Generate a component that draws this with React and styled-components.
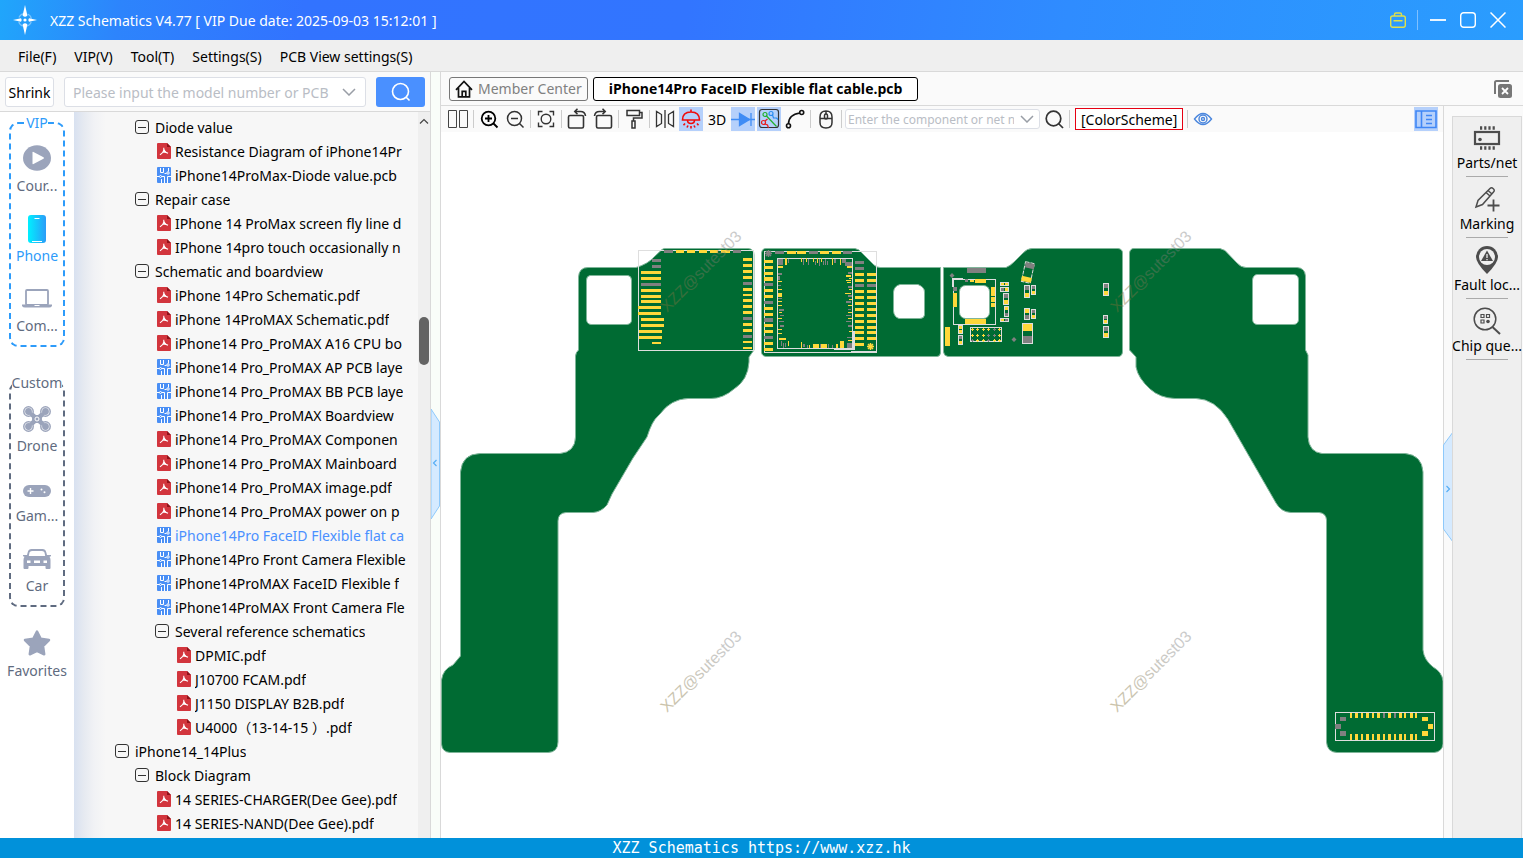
import React, { useState } from 'react'
import styled, { createGlobalStyle, css } from 'styled-components'

const GlobalStyle = createGlobalStyle`
  * {
    box-sizing: border-box;
  }
  body {
    margin: 0;
    background: #fafafa;
    color: #000;
    font-family: 'Noto Sans', 'Noto Sans CJK SC', sans-serif;
    font-size: 14px;
  }
  button,
  input {
    font-family: inherit;
    font-size: inherit;
  }
`

// data
const menus = ['File(F)', 'VIP(V)', 'Tool(T)', 'Settings(S)', 'PCB View settings(S)']

const tree = [
  { level: 1, type: 'folder', name: 'Diode value' },
  { level: 2, type: 'pdf', name: 'Resistance Diagram of iPhone14Pr' },
  { level: 2, type: 'pcb', name: 'iPhone14ProMax-Diode value.pcb' },
  { level: 1, type: 'folder', name: 'Repair case' },
  { level: 2, type: 'pdf', name: 'IPhone 14 ProMax screen fly line d' },
  { level: 2, type: 'pdf', name: 'IPhone 14pro touch occasionally n' },
  { level: 1, type: 'folder', name: 'Schematic and boardview' },
  { level: 2, type: 'pdf', name: 'iPhone 14Pro Schematic.pdf' },
  { level: 2, type: 'pdf', name: 'iPhone 14ProMAX Schematic.pdf' },
  { level: 2, type: 'pdf', name: 'iPhone14 Pro_ProMAX A16 CPU bo' },
  { level: 2, type: 'pcb', name: 'iPhone14 Pro_ProMAX AP PCB laye' },
  { level: 2, type: 'pcb', name: 'iPhone14 Pro_ProMAX BB PCB laye' },
  { level: 2, type: 'pcb', name: 'iPhone14 Pro_ProMAX Boardview' },
  { level: 2, type: 'pdf', name: 'iPhone14 Pro_ProMAX Componen' },
  { level: 2, type: 'pdf', name: 'iPhone14 Pro_ProMAX Mainboard' },
  { level: 2, type: 'pdf', name: 'iPhone14 Pro_ProMAX image.pdf' },
  { level: 2, type: 'pdf', name: 'iPhone14 Pro_ProMAX power on p' },
  { level: 2, type: 'pcb', name: 'iPhone14Pro FaceID Flexible flat ca' },
  { level: 2, type: 'pcb', name: 'iPhone14Pro Front Camera Flexible' },
  { level: 2, type: 'pcb', name: 'iPhone14ProMAX FaceID Flexible f' },
  { level: 2, type: 'pcb', name: 'iPhone14ProMAX Front Camera Fle' },
  { level: 2, type: 'folder', name: 'Several reference schematics' },
  { level: 3, type: 'pdf', name: 'DPMIC.pdf' },
  { level: 3, type: 'pdf', name: 'J10700 FCAM.pdf' },
  { level: 3, type: 'pdf', name: 'J1150 DISPLAY B2B.pdf' },
  { level: 3, type: 'pdf', name: 'U4000（13-14-15 ）.pdf' },
  { level: 0, type: 'folder', name: 'iPhone14_14Plus' },
  { level: 1, type: 'folder', name: 'Block Diagram' },
  { level: 2, type: 'pdf', name: '14 SERIES-CHARGER(Dee Gee).pdf' },
  { level: 2, type: 'pdf', name: '14 SERIES-NAND(Dee Gee).pdf' }
]

const openFile = 'iPhone14Pro FaceID Flexible flat cable.pcb'

// icons
const LogoIcon = () => (
  <svg width="24" height="30" viewBox="0 0 24 30" fill="#fff">
    <path d="M12 0l2.400 10.500q-2.400 2.500-4.800 0z" />
    <path d="M12 30l2.400-10.500q-2.400-2.500-4.800 0z" />
    <path d="M0 15l8-1.800q1.500 1.800 0 3.600z" />
    <path d="M24 15l-8-1.800q-1.500 1.800 0 3.600z" />
    <circle cx="12" cy="15" r="6.500" fill="none" stroke="#fff" strokeWidth="1.200" strokeDasharray="6 4.200" strokeDashoffset="-2" opacity=".4" />
    <circle cx="12" cy="15" r="1.600" />
  </svg>
)

const BagIcon = () => (
  <svg width="16" height="16" viewBox="0 0 16 16" fill="none" stroke="#dfe04a" strokeWidth="1.400">
    <rect x=".7" y="4" width="14.600" height="11.300" rx="2" />
    <path d="M4.500 4V2.500a1.500 1.500 0 0 1 1.500-1.500h4a1.500 1.500 0 0 1 1.500 1.500V4M3.500 8.700h9" />
  </svg>
)

const MinimizeIcon = () => (
  <svg width="16" height="16" viewBox="0 0 16 16">
    <path d="M0 8h16" stroke="#fff" strokeWidth="1.800" />
  </svg>
)

const MaximizeIcon = () => (
  <svg width="16" height="16" viewBox="0 0 16 16">
    <rect x=".7" y=".7" width="14.600" height="14.600" rx="3" fill="none" stroke="#fff" strokeWidth="1.400" />
  </svg>
)

const CloseIcon = () => (
  <svg width="16" height="16" viewBox="0 0 16 16">
    <path d="M.5.5l15 15M15.500.5l-15 15" stroke="#fff" strokeWidth="1.500" />
  </svg>
)

const SearchIcon = ({ size = 20, color = '#fff', width = 1.6 }) => (
  <svg width={size} height={size} viewBox="0 0 20 20" fill="none" stroke={color} strokeWidth={width}>
    <circle cx="9.500" cy="9.500" r="8" />
    <path d="M15.200 15.200l3.300 3.300" />
  </svg>
)

const ChevronIcon = () => (
  <svg width="14" height="8" viewBox="0 0 14 8">
    <path d="M1 1l6 6 6-6" fill="none" stroke="#999ea6" strokeWidth="1.500" />
  </svg>
)

const PdfIcon = () => (
  <svg width="14" height="16" viewBox="0 0 14 16">
    <path d="M1 0h9l4 4v11a1 1 0 0 1-1 1H1a1 1 0 0 1-1-1V1a1 1 0 0 1 1-1z" fill="#d2353d" />
    <path d="M10 0l4 4h-4z" fill="#8f1219" />
    <path d="M6.800 4.800q.3 3.500-1 4.500L3 11.800M5.800 9.300Q8 8.600 11 10.300M7 6.500q.6 2 2 3" fill="none" stroke="#fff" strokeWidth="1.100" />
  </svg>
)

const PcbIcon = () => (
  <svg width="14" height="16" viewBox="0 0 14 16">
    <rect width="14" height="16" rx="1" fill="#4a8ff5" />
    <g fill="none" stroke="#fff">
      <path d="M3.500 1v4.500h3V1M0 9.500h2.500M4.500 9.500h3V16M11.500 1v3.500M9.500 6.500H7.500M14 9.500H10.500V16M4.500 12v4" />
      <circle cx="3.500" cy="9.500" r="1" />
      <circle cx="11" cy="6" r="1.200" />
    </g>
  </svg>
)

const CollapseIcon = () => (
  <svg width="14" height="14" viewBox="0 0 14 14" fill="none" stroke="#333">
    <rect x=".5" y=".5" width="13" height="13" rx="2.500" />
    <path d="M3 7.500h8" />
  </svg>
)

const CourseIcon = () => (
  <svg width="28" height="26" viewBox="0 0 28 26">
    <ellipse cx="14" cy="13" rx="14" ry="12.700" fill="#9ba4bb" />
    <path d="M9.500 7.500v11q0 1 1 .5l10-5.200q1-.8 0-1.500l-10-5.300q-1-.5-1 .5z" fill="#fff" />
  </svg>
)

const PhoneIcon = () => (
  <svg width="18" height="30" viewBox="0 0 18 30">
    <defs>
      <linearGradient id="phoneFill">
        <stop offset="0" stopColor="#00f0ff" />
        <stop offset="1" stopColor="#2b9cf8" />
      </linearGradient>
    </defs>
    <rect y="2" width="18" height="28" rx="3" fill="url(#phoneFill)" />
    <path d="M6.500 5.500h5M4 28.500h10" stroke="#fff" strokeWidth="1.200" />
  </svg>
)

const LaptopIcon = () => (
  <svg width="30" height="20" viewBox="0 0 30 20">
    <rect x="4" y="2" width="22" height="15" rx="1" fill="none" stroke="#9ba4bb" strokeWidth="1.800" />
    <path d="M0 16.500h30v1.500q-1 1.500-3 1.500H3q-2 0-3-1.500z" fill="#9ba4bb" />
    <path d="M12.500 17.500h5" stroke="#fff" />
  </svg>
)

const DroneIcon = () => (
  <svg width="28" height="28" viewBox="0 -2 28 28" fill="none" stroke="#9ba4bb">
    <path d="M6 6l16 14M22 6L6 20" strokeWidth="4.500" />
    <ellipse cx="14" cy="13" rx="4.500" ry="3.500" fill="#9ba4bb" />
    <circle cx="14" cy="13" r="2" stroke="#fff" />
    <g strokeWidth="1.500" fill="#fff">
      <circle cx="5.500" cy="5.500" r="4.700" />
      <circle cx="22.500" cy="5.500" r="4.700" />
      <circle cx="5.500" cy="20.500" r="4.700" />
      <circle cx="22.500" cy="20.500" r="4.700" />
    </g>
    <g fill="#9ba4bb" stroke="none">
      <circle cx="5.500" cy="5.500" r="3.400" />
      <circle cx="22.500" cy="5.500" r="3.400" />
      <circle cx="5.500" cy="20.500" r="3.400" />
      <circle cx="22.500" cy="20.500" r="3.400" />
    </g>
    <path d="M7 7l4 3.400M21 7l-4 3.400M7 19l4-3.400M21 19l-4-3.400" strokeWidth="3" />
  </svg>
)

const GamepadIcon = () => (
  <svg width="28" height="18" viewBox="0 -6 28 18">
    <rect width="28" height="12" rx="6" fill="#9ba4bb" />
    <path d="M4.500 6h6M7.500 3v6" stroke="#fff" strokeWidth="1.400" />
    <circle cx="18.500" cy="4.500" r="1" fill="#fff" />
    <circle cx="21.500" cy="7.300" r="1" fill="#fff" />
  </svg>
)

const CarIcon = () => (
  <svg width="28" height="24" viewBox="0 -2 28 24">
    <path
      fillRule="evenodd"
      d="M8.500 1h11q3 0 3.700 3l.8 3h4q.3 1.500-1.500 1.800 1 1.200 1 3.200v8q0 1-1 1h-3q-1 0-1-1v-2H5.500v2q0 1-1 1h-3q-1 0-1-1v-8q0-2 1-3.200Q-.3 8.500 0 7h4l.8-3Q5.500 1 8.500 1zM9 3q-2 0-2.500 1.500L5.800 8h16.400l-.7-3.500Q21 3 19 3zM4 12.500v2.600h3.500v-2.600zM20.500 12.500v2.600H24v-2.600zM11 12.500v2.600h6v-2.600z"
      fill="#9ba4bb"
    />
  </svg>
)

const StarIcon = () => (
  <svg width="28" height="28" viewBox="0 0 28 28">
    <path
      d="M14 2.500l3.700 7.200 8.300 1.300-6 6 1.200 8.300-7.200-3.500-7.200 3.500L8 17l-6-6 8.300-1.300z"
      fill="#9ba4bb"
      stroke="#9ba4bb"
      strokeWidth="2.500"
      strokeLinejoin="round"
    />
  </svg>
)

const HomeIcon = () => (
  <svg width="18" height="18" viewBox="0 0 18 18" fill="none" stroke="#111" strokeWidth="1.700">
    <path d="M1 9.800L9 1.500l8 8.300M3.500 8v8.800h11V8M7.200 16.800v-5.500h3.600v5.500" />
  </svg>
)

const CloseAllIcon = () => (
  <svg width="18" height="18" viewBox="0 0 18 18">
    <path d="M1 14V2.500Q1 1 2.500 1H15" fill="none" stroke="#777" strokeWidth="2" />
    <rect x="4" y="4" width="14" height="14" rx="2.500" fill="#777" />
    <path d="M8 8l6 6M14 8l-6 6" stroke="#fff" strokeWidth="1.800" />
  </svg>
)

const toolIcons = {
  split: (
    <path d="M2.500 3.500h8v17h-8zM13.500 3.500h8v17h-8z" stroke="#444" />
  ),
  zoomIn: (
    <g stroke="#000" strokeWidth="1.800">
      <circle cx="11.500" cy="11.500" r="6.800" />
      <path d="M16.500 16.500l4 4M8 11.500h7M11.500 8v7" />
    </g>
  ),
  zoomOut: (
    <g strokeWidth="1.500">
      <circle cx="11.500" cy="11.500" r="7" />
      <path d="M16.500 16.500l4 4M8 11.500h7" />
    </g>
  ),
  fit: (
    <g strokeWidth="1.400">
      <circle cx="12" cy="12" r="4.800" />
      <path d="M4.500 8.500v-4h4M15.500 4.500h4v4M19.500 15.500v4h-4M8.500 19.500h-4v-4" />
    </g>
  ),
  rotateLeft: (
    <g strokeWidth="1.600">
      <rect x="3.500" y="8.500" width="15" height="12.500" rx="1.500" />
      <path d="M10 4.500h5.500q4.500 0 5 4.500M12.500 1.800L9.800 4.500l2.700 2.700" />
    </g>
  ),
  rotateRight: (
    <g strokeWidth="1.600">
      <rect x="5.500" y="8.500" width="15" height="12.500" rx="1.500" />
      <path d="M14 4.500H8.500q-4.500 0-5 4.500M11.500 1.800l2.700 2.700-2.700 2.700" />
    </g>
  ),
  roller: (
    <g strokeWidth="1.500">
      <path d="M5 3.500h12.500v5H5zM17.500 5.500h2.500v5.500h-8.500v3M10 14h3v7h-3z" />
    </g>
  ),
  mirror: (
    <g strokeWidth="1.300">
      <path d="M12 3v18M3.500 4.500v15l5-3v-9zM20.500 4.500v15l-5-3v-9z" />
    </g>
  ),
  lamp: (
    <g stroke="#f00b0b" strokeWidth="1.600">
      <path d="M3.500 13q0-8 8.500-8t8.500 8zM12 5V2.500M8.500 13q0 3.500 3.500 3.500t3.500-3.500M6 16.500l-1.500 1.700M9 18.500l-1 2M12 19v2.500M15 18.500l1 2M18 16.500l1.500 1.700" />
    </g>
  ),
  diode: (
    <g stroke="#3f8cf5" strokeWidth="1.300">
      <path d="M0 12.500h24M20 6v13" />
      <path d="M8.500 6.500v12l10-6z" fill="#3f8cf5" />
    </g>
  ),
  trace: (
    <g strokeWidth="1.200">
      <rect x="2.500" y="2.500" width="19" height="18" rx="2.500" />
      <g stroke="#e81c1c">
        <circle cx="6.500" cy="15.500" r="2" />
        <path d="M8 17l2.500 1 1 3M8 14l2.500-2" />
      </g>
      <g stroke="#21b12c">
        <circle cx="8" cy="7.500" r="2" />
        <path d="M9.500 9l10 10.500" />
      </g>
      <g stroke="#2b8cf0">
        <circle cx="14" cy="6.500" r="2" />
        <path d="M15.500 8l1 3h3l1.500 1.500" />
      </g>
    </g>
  ),
  curve: (
    <g strokeWidth="1.600" stroke="#111">
      <path d="M5.500 17q0-9.500 11.500-11" />
      <circle cx="5.500" cy="18.700" r="2" />
      <circle cx="18.700" cy="5.500" r="2" />
    </g>
  ),
  mouse: (
    <g strokeWidth="1.500">
      <path d="M6 10q0-6 6-6t6 6v5.500q0 5.500-6 5.500t-6-5.500zM6 11.500h12M12 4v3" />
      <rect x="10.500" y="7" width="3" height="5" rx="1.500" />
    </g>
  ),
  search: (
    <g strokeWidth="1.700">
      <circle cx="11.500" cy="11.500" r="7.300" />
      <path d="M16.500 16.500l4.500 4.500" />
    </g>
  ),
  eye: (
    <g stroke="#4a86dd" strokeWidth="1.400">
      <path d="M3.500 12Q12 1 20.500 12 12 23 3.500 12z" />
      <circle cx="12" cy="12" r="4" />
      <circle cx="12" cy="12" r="1.500" />
    </g>
  ),
  panel: (
    <g stroke="#3f86f5" strokeWidth="1.600">
      <path d="M2 4h20v16.500H2zM7.500 4v16.500M12 8.500h6M12 12.500h6M12 16.500h6" />
    </g>
  )
}

const PartsIcon = () => (
  <svg width="28" height="28" viewBox="0 0 28 28">
    <rect x="2" y="8" width="24" height="12" fill="none" stroke="#4d4d4d" strokeWidth="2.200" />
    <circle cx="7" cy="15.500" r="1.800" fill="#4d4d4d" />
    <path d="M7 4h15M7 24h15" stroke="#4d4d4d" strokeWidth="3.500" strokeDasharray="2.200 2" />
  </svg>
)

const MarkingIcon = () => (
  <svg width="28" height="28" viewBox="0 0 28 28" fill="none" stroke="#4d4d4d" strokeWidth="1.500">
    <path d="M3 22l2-6.500L17 3.500q1.500-1.500 3.300.2t.2 3.300L9.500 19.500zM15 5.500l4 3.500M13 7.500l4 3.500" />
    <path d="M20.500 14.500v12M14.500 20.500h12" strokeWidth="1.800" />
  </svg>
)

const FaultIcon = () => (
  <svg width="28" height="28" viewBox="0 0 28 28">
    <path d="M14 28Q3 17 3 11a11 11 0 0 1 22 0q0 6-11 17z" fill="#4d4d4d" />
    <circle cx="14" cy="11" r="8" fill="#efefef" />
    <path d="M14 4.500l6 10.500H8z" fill="#4d4d4d" />
    <path d="M14 8v4M14 13v1.200" stroke="#efefef" strokeWidth="1.300" />
  </svg>
)

const ChipIcon = () => (
  <svg width="28" height="28" viewBox="0 0 28 28" fill="none" stroke="#4d4d4d" strokeWidth="1.500">
    <circle cx="12" cy="12" r="10.800" />
    <path d="M19.500 20l7.500 7" strokeWidth="2" />
    <path d="M8 7.500h3v3H8zM13.500 7.500h3v3h-3zM8 13h3v3H8z" strokeWidth="1.200" />
    <circle cx="15" cy="14.500" r="1.800" fill="#4d4d4d" stroke="none" />
  </svg>
)

const sideTools = [
  { name: 'Parts/net', icon: <PartsIcon /> },
  { name: 'Marking', icon: <MarkingIcon /> },
  { name: 'Fault loc...', icon: <FaultIcon /> },
  { name: 'Chip que...', icon: <ChipIcon /> }
]

const vipNav = [
  { name: 'Cour...', icon: <CourseIcon /> },
  { name: 'Phone', icon: <PhoneIcon /> },
  { name: 'Com...', icon: <LaptopIcon /> }
]

const customNav = [
  { name: 'Drone', icon: <DroneIcon /> },
  { name: 'Gam...', icon: <GamepadIcon /> },
  { name: 'Car', icon: <CarIcon /> }
]

const Tool = ({ name, label, active }) => (
  <ToolButton type="button" aria-label={label} $active={active}>
    <svg width="24" height="24" viewBox="0 0 24 24" fill="none" stroke="#333">
      {toolIcons[name]}
    </svg>
  </ToolButton>
)

// board drawing
const GOLD = '#ffd83a'
const GRAY = '#808080'
const SILK = '#dedede'

// every pad is [x, y, width, height, isGray]
const topLeftPads = [
  [664, 250, 9, 3, 1], [676, 250, 8, 3], [687, 250, 8, 3], [699, 250, 8, 3],
  [710, 250, 8, 3], [721, 250, 9, 3], [733, 250, 8, 3, 1],
  [652, 259, 9, 3, 1], [652, 265, 9, 3, 1], [641, 271, 20, 3], [641, 277, 20, 3],
  [641, 283, 20, 3, 1], [641, 289, 20, 3], [641, 295, 20, 3], [641, 300, 20, 3],
  [638, 306, 23, 3], [638, 312, 23, 3], [641, 318, 23, 3], [641, 324, 23, 3],
  [639, 330, 23, 3], [639, 336, 23, 3], [652, 342, 9, 2],
  [743, 258, 9, 3], [743, 264, 9, 3], [743, 270, 9, 3], [743, 276, 9, 3],
  [743, 282, 9, 3, 1], [743, 288, 9, 3], [743, 294, 9, 2], [743, 299, 9, 3],
  [743, 305, 9, 3], [743, 311, 9, 3], [743, 317, 9, 3, 1], [743, 323, 9, 3],
  [743, 329, 9, 3], [743, 335, 9, 3, 1], [743, 341, 9, 2], [743, 347, 9, 2]
]

const socketPads = [
  [775, 251, 9, 3, 1], [787, 251, 9, 3], [797, 251, 9, 3], [809, 251, 9, 3, 1],
  [820, 251, 9, 3], [832, 251, 9, 3], [843, 251, 9, 3, 1],
  [764, 260, 9, 3], [764, 266, 9, 3], [764, 272, 9, 3], [764, 277, 9, 4],
  [764, 283, 9, 3, 1], [764, 289, 9, 3], [764, 295, 9, 3], [764, 301, 9, 3, 1],
  [764, 307, 9, 3], [764, 313, 9, 3], [764, 318, 9, 4, 1], [764, 324, 9, 3],
  [764, 330, 9, 3], [764, 336, 9, 3, 1], [764, 342, 9, 3], [764, 348, 9, 3],
  [855, 261, 9, 3, 1], [855, 267, 9, 3, 1], [855, 343, 9, 3],
  // fine pitch pads along the four inner edges
  [778, 259, 5, 6, 1], [785, 258, 2, 7], [788, 259, 1, 4, 1], [801, 258, 1, 4], [803, 259, 1, 6, 1],
  [806, 258, 1, 4], [808, 259, 1, 6, 1], [813, 258, 1, 4], [815, 261, 1, 4, 1], [817, 258, 1, 5],
  [819, 259, 1, 7, 1], [821, 258, 1, 4], [823, 261, 1, 4, 1], [825, 259, 1, 6, 1], [827, 261, 1, 4, 1],
  [832, 258, 1, 7], [834, 259, 2, 4, 1], [840, 259, 1, 6], [842, 259, 4, 4, 1], [845, 262, 3, 4, 1],
  [847, 262, 5, 4, 1], [778, 266, 5, 2], [847, 266, 5, 2],
  [778, 273, 4, 2, 1], [778, 276, 2, 4, 1], [778, 281, 4, 1], [778, 285, 3, 1, 1], [778, 289, 4, 1],
  [778, 293, 4, 4], [778, 298, 4, 1, 1], [778, 301, 4, 1], [778, 305, 4, 1], [779, 309, 5, 2, 1],
  [779, 312, 3, 1], [780, 315, 4, 1, 1], [778, 318, 4, 1], [779, 321, 5, 1, 1], [780, 325, 4, 2, 1],
  [778, 329, 4, 1], [778, 333, 4, 1], [779, 338, 7, 2], [781, 341, 1, 5, 1], [783, 343, 1, 5, 1],
  [785, 343, 1, 4, 1], [788, 341, 1, 5], [801, 342, 1, 6], [803, 344, 2, 3, 1], [807, 345, 1, 3, 1],
  [809, 345, 1, 3], [813, 344, 6, 4], [820, 344, 1, 4, 1], [821, 344, 6, 4], [828, 344, 1, 4, 1],
  [832, 345, 1, 3, 1], [836, 344, 2, 4], [840, 341, 4, 7], [847, 343, 5, 5, 1],
  [848, 272, 4, 2, 1], [846, 275, 5, 2], [849, 278, 3, 1], [846, 280, 5, 1], [847, 282, 4, 1],
  [848, 286, 4, 2, 1], [849, 289, 3, 1], [845, 293, 6, 1], [848, 295, 4, 2, 1], [849, 299, 3, 1],
  [846, 301, 5, 2, 1], [848, 305, 4, 1], [848, 309, 3, 1, 1], [848, 312, 4, 1], [846, 315, 5, 1, 1],
  [848, 318, 4, 1], [846, 321, 5, 1, 1], [848, 325, 4, 2, 1], [849, 331, 3, 1], [847, 337, 5, 1, 1],
  [848, 340, 4, 1]
]

const pairedRows = [273, 279, 284, 290, 296, 302, 308, 314, 320, 326, 331, 337]

const sensorPads = [
  [967, 268, 19, 5, 1], [965, 279, 3, 3, 1], [970, 280, 4, 2], [975, 279, 11, 4],
  [991, 287, 4, 9], [991, 297, 4, 5], [991, 303, 4, 4], [953, 287, 4, 4, 1],
  [953, 293, 4, 14], [965, 319, 21, 5], [945, 327, 5, 19]
]

// two terminal parts: x, y, width, height, first and last terminal colours
const chips = [
  [958, 325, 5, 9, GOLD, GOLD],
  [958, 335, 5, 10, GRAY, GOLD],
  [1003, 293, 6, 12, GRAY, GOLD],
  [1004, 306, 5, 11, GOLD, GRAY],
  [1024, 285, 6, 13, GRAY, GOLD],
  [1031, 285, 5, 10, GRAY, GOLD],
  [1024, 308, 6, 12, GOLD, GRAY],
  [1031, 309, 5, 10, GRAY, GOLD],
  [1022, 323, 11, 21, GOLD, GRAY],
  [1103, 283, 6, 13, GRAY, GOLD],
  [1103, 315, 5, 9, GRAY, GOLD],
  [1103, 326, 6, 12, GRAY, GOLD]
]

const flatChips = [
  [1000, 282, 9, 4, GOLD, GOLD],
  [1000, 287, 9, 5, GRAY, GOLD],
  [1000, 318, 9, 4, GOLD, GRAY]
]

const gridX = [971, 976, 982, 987, 993, 998]
const gridY = [328, 334, 339]
const connectorX = [1350, 1355, 1361, 1366, 1372, 1377, 1383, 1388, 1394, 1399, 1404, 1410, 1415]

const connectorPads = [
  [1340, 717, 6, 4, 1], [1335, 724, 6, 5, 1], [1340, 731, 6, 5, 1],
  [1422, 717, 6, 4], [1428, 724, 5, 5], [1422, 731, 6, 5]
]

const watermarks = [[667, 313], [1117, 313], [667, 713], [1117, 713]]

const Pads = ({ pads }) =>
  pads.map(([x, y, w, h, gray]) => (
    <rect key={`${x}-${y}-${w}`} x={x} y={y} width={w} height={h} fill={gray ? GRAY : GOLD} />
  ))

const Board = () => (
  <BoardSvg viewBox="441 132 1002 706" role="img" aria-label="Board view">
    <defs>
      <linearGradient id="mark">
        <stop offset="0" stopColor="#826e32" />
        <stop offset=".8" stopColor="#808080" />
      </linearGradient>
    </defs>
    <g fill="#006b33" stroke="#7fb599" strokeWidth="1" fillRule="evenodd">
      <path d="M578.500 277Q579 267.500 588 267.500H636Q648 264 654 257L662 249.500Q664 248 667 248.500H748Q754 249 754 255V350L749 357V362Q748 380 734 389Q723 398.500 711 398.500H688Q671 399 660 414L658 416Q652 421 647 437L633 458L612 494L607 505Q601 512 593 512.500H566Q558 513 558 521V742Q558 752 548 752.500H450Q442 752 441.500 744V680Q443 669 453 665L460.500 656V472Q462 454 480 453.500H560Q575 452 575.500 437V356Q576 352 578.500 350ZM590 275.500H628Q631.500 276 631.500 280V320Q631.500 324 627 324.500H591Q586.500 324 586.500 319V280Q586.500 276 590 275.500Z" />
      <path d="M761.500 253Q762 248.500 766 248.500H855L859 250L874 265Q877 267.500 880 267.500H940.500V353Q940 356.500 937 356.500H766Q761.500 356 761.500 352ZM900 284.500H918Q924.500 287 924.500 292V315Q924 318.500 920 318.500H899Q894 317 893.500 311V292Q894 286 900 284.500Z" />
      <path d="M943.500 267.500H1006Q1010 266 1014 262L1023 253Q1027 248.500 1032 248.500H1118Q1122.500 249 1122.500 253V352Q1122 356.500 1118 356.500H948Q944 356 943.500 352Z" />
      <path d="M1129.500 253Q1130 248.500 1134 248.500H1220L1225 250.500L1237 263Q1241 267.500 1246 267.500H1297Q1305 268 1305.500 276V350L1308 355V437Q1309 452 1322 453.500H1405Q1422 455 1423 472V650Q1424 660 1433 667Q1442 672 1443 681V744Q1442 752 1434 752.500H1337Q1327 752 1326.500 742V520Q1326 513 1319 512.500H1291Q1281 512 1276 503L1228 419.500Q1215 399 1196 398.500H1175Q1160 398 1150 389Q1138 378 1136 367V357L1129.500 350ZM1257 274.500H1294Q1298.500 275 1298.500 280V320Q1298 324.500 1293 324.500H1257Q1252.500 324 1252.500 319V280Q1253 275 1257 274.500Z" />
    </g>
    <g shapeRendering="crispEdges" fill="none" stroke={SILK}>
      <rect x="638.500" y="250.500" width="115" height="100" />
      <rect x="764.500" y="251.500" width="112" height="101" />
      <rect x="777.500" y="258.500" width="75" height="90" />
      <path d="M834 348.500h20v-18M851 351.500h26" strokeWidth="2" />
      <rect x="953.500" y="279.500" width="42" height="45" />
      <path d="M952.500 287v-8.500h10" />
      <rect x="970.500" y="327.500" width="31" height="14" />
      <rect x="1335.500" y="712.500" width="99" height="28" />
    </g>
    <rect x="959.500" y="285.500" width="30" height="33" rx="6" fill="#fff" stroke="#7fb599" />
    <g shapeRendering="crispEdges">
      <Pads pads={topLeftPads} />
      <Pads pads={socketPads} />
      {pairedRows.map(y => (
        <Pads key={y} pads={[[855, y, 9, 3, y === 284], [867, y, 9, 3, y === 284]]} />
      ))}
      <Pads pads={sensorPads} />
      {chips.map(([x, y, w, h, first, last]) => (
        <g key={`${x}-${y}`}>
          <rect x={x + 0.5} y={y + 0.5} width={w - 1} height={h - 1} fill="none" stroke={SILK} />
          <rect x={x + 1} y={y + 1} width={w - 2} height={Math.floor(h / 3)} fill={first} />
          <rect x={x + 1} y={y + h - 1 - Math.floor(h / 3)} width={w - 2} height={Math.floor(h / 3)} fill={last} />
        </g>
      ))}
      {flatChips.map(([x, y, w, h, first, last]) => (
        <g key={`${x}-${y}`}>
          <rect x={x + 0.5} y={y + 0.5} width={w - 1} height={h - 1} fill="none" stroke={SILK} />
          <rect x={x + 1} y={y + 1} width="3" height={h - 2} fill={first} />
          <rect x={x + w - 4} y={y + 1} width="3" height={h - 2} fill={last} />
        </g>
      ))}
      {gridX.map((x, i) =>
        gridY.map((y, j) => (
          <path
            key={`${x}-${y}`}
            d={`M${x} ${y + 1.5}h3M${x + 1.5} ${y}v3`}
            stroke={(i === 3 && j > 0) || (i === 4 && j < 2) || (i === 0 && j === 2) ? GRAY : GOLD}
          />
        ))
      )}
      {connectorX.map((x, i) => (
        <Pads key={x} pads={[[x, 713, i % 2 ? 3 : 2, 5, i === 6 || i === 8], [x, 734, i % 2 ? 3 : 2, 6]]} />
      ))}
      <Pads pads={connectorPads} />
    </g>
    <g transform="rotate(12 1028 272)">
      <rect x="1023.500" y="262.500" width="9" height="20" fill="none" stroke={SILK} strokeDasharray="4 1" />
      <rect x="1024" y="263" width="9" height="5" fill={GRAY} />
      <rect x="1023" y="277" width="10" height="5" fill={GOLD} />
    </g>
    <path d="M952 273l2.500 2.500-2.500 2.500-2.500-2.500zM1014 337l2.500 2.500-2.500 2.500-2.500-2.500z" fill={GRAY} />
    <path d="M768.500 250v7M765 253.500h7M766 251l5 5M771 251l-5 5" stroke={GRAY} strokeWidth="1.500" />
    <path d="M870.500 343v7M867 346.500h7M868 344l5 5M873 344l-5 5" stroke={GOLD} strokeWidth="1.500" />
    {watermarks.map(([x, y]) => (
      <Watermark key={`${x}-${y}`} transform={`translate(${x} ${y}) rotate(-45)`}>
        XZZ@sutest03
      </Watermark>
    ))}
  </BoardSvg>
)

const FileTree = () => {
  const [selected, setSelected] = useState('iPhone14Pro FaceID Flexible flat ca')

  return (
    <TreeList>
      {tree.map(node => (
        <li key={node.name}>
          <TreeRow
            type="button"
            $level={node.level}
            $file={node.type !== 'folder'}
            $active={node.name === selected}
            onClick={() => node.type !== 'folder' && setSelected(node.name)}
          >
            {node.type === 'folder' && <CollapseIcon />}
            {node.type === 'pdf' && <PdfIcon />}
            {node.type === 'pcb' && <PcbIcon />}
            <TreeLabel>{node.name}</TreeLabel>
          </TreeRow>
        </li>
      ))}
    </TreeList>
  )
}

const App = () => {
  const [device, setDevice] = useState('Phone')

  const renderNav = item => (
    <NavButton
      key={item.name}
      type="button"
      $active={item.name === device}
      onClick={() => setDevice(item.name)}
    >
      <NavIcon>{item.icon}</NavIcon>
      <NavLabel>{item.name}</NavLabel>
    </NavButton>
  )

  return (
    <Page>
      <GlobalStyle />
      <TitleBar>
        <LogoIcon />
        <Title>XZZ Schematics V4.77 [ VIP Due date: 2025-09-03 15:12:01 ]</Title>
        <WindowButton type="button" aria-label="Toolbox">
          <BagIcon />
        </WindowButton>
        <TitleDivider />
        <WindowButton type="button" aria-label="Minimize">
          <MinimizeIcon />
        </WindowButton>
        <WindowButton type="button" aria-label="Maximize">
          <MaximizeIcon />
        </WindowButton>
        <WindowButton type="button" aria-label="Close">
          <CloseIcon />
        </WindowButton>
      </TitleBar>

      <MenuBar>
        {menus.map(name => (
          <MenuButton key={name} type="button">
            {name}
          </MenuButton>
        ))}
      </MenuBar>

      <Body>
        <LeftPanel>
          <SearchRow>
            <ShrinkButton type="button">Shrink</ShrinkButton>
            <ModelField>
              <FieldInput aria-label="Model number" placeholder="Please input the model number or PCB" />
              <ChevronIcon />
            </ModelField>
            <SearchButton type="button" aria-label="Search model">
              <SearchIcon />
            </SearchButton>
          </SearchRow>
          <LeftContent>
            <SideNav>
              <NavGroup $color="#2d9bfa">
                <NavLegend>VIP</NavLegend>
                {vipNav.map(renderNav)}
              </NavGroup>
              <NavGroup $color="#5f6b80">
                <NavLegend>Custom</NavLegend>
                {customNav.map(renderNav)}
              </NavGroup>
              {renderNav({ name: 'Favorites', icon: <StarIcon /> })}
            </SideNav>
            <TreePane>
              <FileTree />
            </TreePane>
            <ScrollTrack>
              <svg width="10" height="6" viewBox="0 0 10 6">
                <path d="M1 5.500l4-4 4 4" fill="none" stroke="#444" strokeWidth="1.200" />
              </svg>
              <ScrollThumb />
            </ScrollTrack>
          </LeftContent>
        </LeftPanel>

        <LeftSplitter>
          <svg width="9" height="110" viewBox="0 0 9 110">
            <path d="M0 0l8.500 13v84L0 110z" fill="#d5eaff" stroke="#8ec9fb" />
            <path d="M5.500 51l-3 3 3 3" fill="none" stroke="#57aef5" strokeWidth="1.200" />
          </svg>
        </LeftSplitter>

        <Workspace>
          <TabRow>
            <MemberTab type="button">
              <HomeIcon />
              Member Center
            </MemberTab>
            <FileTab type="button">{openFile}</FileTab>
            <CloseAllButton type="button" aria-label="Close all tabs">
              <CloseAllIcon />
            </CloseAllButton>
          </TabRow>
          <WorkArea>
            <Viewer>
              <Toolbar>
                <Tool name="split" label="Split view" />
                <Divider />
                <Tool name="zoomIn" label="Zoom in" />
                <Tool name="zoomOut" label="Zoom out" />
                <Divider />
                <Tool name="fit" label="Fit to window" />
                <Divider />
                <Tool name="rotateLeft" label="Rotate left" />
                <Tool name="rotateRight" label="Rotate right" />
                <Divider />
                <Tool name="roller" label="Paint" />
                <Divider />
                <Tool name="mirror" label="Mirror" />
                <Tool name="lamp" label="Light" active />
                <ToolButton type="button">3D</ToolButton>
                <Tool name="diode" label="Diode value" active />
                <Tool name="trace" label="Net colours" active />
                <Tool name="curve" label="Curve" />
                <Divider />
                <Tool name="mouse" label="Mouse mode" />
                <Divider />
                <NetField>
                  <FieldInput aria-label="Component or net" placeholder="Enter the component or net n" />
                  <ChevronIcon />
                </NetField>
                <Tool name="search" label="Search component" />
                <Divider />
                <SchemeButton type="button">[ColorScheme]</SchemeButton>
                <Divider />
                <Tool name="eye" label="Visibility" />
                <ToolSpacer />
                <Tool name="panel" label="Side panel" active />
              </Toolbar>
              <Canvas>
                <Board />
              </Canvas>
            </Viewer>
            <RightSplitter>
              <svg width="10" height="110" viewBox="0 0 10 110">
                <path d="M10 0L.5 13v84L10 110z" fill="#d5eaff" stroke="#8ec9fb" />
                <path d="M3.500 54l3 3-3 3" fill="none" stroke="#57aef5" strokeWidth="1.200" />
              </svg>
            </RightSplitter>
            <SidePanel>
              {sideTools.map(tool => (
                <SideButton key={tool.name} type="button">
                  {tool.icon}
                  <SideLabel>{tool.name}</SideLabel>
                  <SideLine />
                </SideButton>
              ))}
            </SidePanel>
          </WorkArea>
        </Workspace>
      </Body>

      <StatusBar>XZZ Schematics https://www.xzz.hk</StatusBar>
    </Page>
  )
}

// style
const plainButton = css`
  margin: 0;
  padding: 0;
  border: none;
  background: none;
  color: inherit;
  cursor: pointer;
`

const Page = styled.div`
  display: flex;
  flex-direction: column;
  height: 100vh;
  overflow: hidden;
`

const TitleBar = styled.header`
  display: flex;
  flex: none;
  align-items: center;
  height: 40px;
  padding: 0 10px 0 13px;
  color: #fff;
  background: linear-gradient(100deg, #20a6fb 0%, #2d84fc 8%, #3273ff 20%, #3275ff 45%, #2f8cff 70%, #2a9dfe 100%);
`

const Title = styled.h1`
  flex: 1;
  margin: 0 0 0 13px;
  font-size: 14px;
  font-weight: 400;
`

const WindowButton = styled.button`
  ${plainButton}
  display: flex;
  align-items: center;
  justify-content: center;
  width: 30px;
  height: 30px;
`

const TitleDivider = styled.div`
  width: 1px;
  height: 20px;
  margin: 0 5px 0 4px;
  background: #7fc0ff;
`

const MenuBar = styled.nav`
  display: flex;
  flex: none;
  gap: 18px;
  height: 32px;
  padding: 2px 18px 0;
  border-bottom: 1px solid #d9d9d9;
  background: #efefef;
`

const MenuButton = styled.button`
  ${plainButton}
  white-space: nowrap;
`

const Body = styled.div`
  display: flex;
  flex: 1;
  min-height: 0;
`

const LeftPanel = styled.aside`
  display: flex;
  flex: none;
  flex-direction: column;
  width: 431px;
  border-right: 1px solid #d9d9d9;
`

const SearchRow = styled.div`
  display: flex;
  flex: none;
  align-items: center;
  height: 40px;
  padding: 1px 5px 0;
  border-bottom: 1px solid #d9d9d9;
`

const ShrinkButton = styled.button`
  ${plainButton}
  width: 49px;
  height: 30px;
  border: 1px solid #dcdfe6;
  border-radius: 3px;
  background: #fff;
`

const field = css`
  display: flex;
  align-items: center;
  border: 1px solid #dcdfe6;
  border-radius: 3px;
  background: #fff;
`

const ModelField = styled.div`
  ${field}
  flex: 1;
  height: 30px;
  margin: 0 10px;
  padding: 0 9px 0 8px;
`

const FieldInput = styled.input`
  flex: 1;
  min-width: 0;
  margin-right: 6px;
  padding: 0;
  border: none;
  outline: none;
  background: transparent;
  &::placeholder {
    color: #b9bdc5;
    opacity: 1;
  }
`

const SearchButton = styled.button`
  ${plainButton}
  display: flex;
  align-items: center;
  justify-content: center;
  width: 49px;
  height: 30px;
  border-radius: 3px;
  background: #4a90ff;
`

const LeftContent = styled.div`
  display: flex;
  flex: 1;
  min-height: 0;
`

const SideNav = styled.nav`
  display: flex;
  flex: none;
  flex-direction: column;
  align-items: center;
  gap: 20px;
  width: 74px;
  background: #fff;
`

const NavGroup = styled.fieldset`
  display: flex;
  flex-direction: column;
  gap: 14px;
  align-items: center;
  width: 56px;
  min-width: 0;
  margin: 0;
  padding: 8px 0 7px;
  border: 2px dashed ${p => p.$color};
  border-radius: 9px;
  color: ${p => p.$color};
  & + & {
    margin-top: 5px;
  }
`

const NavLegend = styled.legend`
  height: 22px;
  margin: 0 auto;
  padding: 0;
  line-height: 22px;
`

const NavButton = styled.button`
  ${plainButton}
  color: ${p => (p.$active ? '#2d9bfa' : '#5f6b80')};
`

const NavIcon = styled.span`
  display: flex;
  align-items: center;
  justify-content: center;
  height: 32px;
`

const NavLabel = styled.span`
  display: block;
  line-height: 24px;
`

const TreePane = styled.div`
  flex: 1;
  min-width: 0;
  padding: 3px 8px 0 41px;
  overflow: hidden;
  background: linear-gradient(to right, #d8e1f0 0, #e6eaf1 10px, #f1f2f5 20px, #f7f7f7 32px);
`

const TreeList = styled.ul`
  margin: 0;
  padding: 0;
  list-style: none;
`

const TreeRow = styled.button`
  ${plainButton}
  display: flex;
  align-items: center;
  gap: ${p => (p.$file ? '4px' : '6px')};
  width: 100%;
  height: 24px;
  padding-left: ${p => p.$level * 20 + (p.$file ? 2 : 0)}px;
  color: ${p => (p.$active ? '#4a90ff' : '#000')};
  svg {
    flex: none;
  }
`

const TreeLabel = styled.span`
  overflow: hidden;
  white-space: nowrap;
`

const ScrollTrack = styled.div`
  display: flex;
  flex: none;
  flex-direction: column;
  align-items: center;
  gap: 193px;
  width: 12px;
  padding-top: 6px;
  background: #efefef;
`

const ScrollThumb = styled.div`
  width: 10px;
  height: 48px;
  border-radius: 5px;
  background: #636363;
`

const LeftSplitter = styled.div`
  display: flex;
  flex: none;
  align-items: center;
  width: 10px;
  padding-top: 18px;
  border-right: 1px solid #d9d9d9;
  background: #f9fdf9;
  svg {
    flex: none;
  }
`

const Workspace = styled.main`
  display: flex;
  flex: 1;
  flex-direction: column;
  min-width: 0;
`

const TabRow = styled.div`
  display: flex;
  flex: none;
  align-items: center;
  gap: 5px;
  height: 34px;
  padding: 0 11px 0 8px;
  border-bottom: 1px solid #d9d9d9;
`

const MemberTab = styled.button`
  ${plainButton}
  display: flex;
  align-items: center;
  gap: 5px;
  height: 24px;
  padding: 0 5px;
  border: 1px solid #777;
  border-radius: 3px;
  color: #808080;
`

const FileTab = styled.button`
  ${plainButton}
  height: 24px;
  padding: 0 15px;
  border: 1px solid #000;
  border-radius: 3px;
  background: #fff;
  font-family: 'Open Sans', sans-serif;
  font-weight: 700;
`

const CloseAllButton = styled.button`
  ${plainButton}
  display: flex;
  margin-left: auto;
`

const WorkArea = styled.div`
  display: flex;
  flex: 1;
  min-height: 0;
`

const Viewer = styled.div`
  display: flex;
  flex: 1;
  flex-direction: column;
  min-width: 0;
`

const Toolbar = styled.div`
  display: flex;
  flex: none;
  align-items: center;
  gap: 2px;
  height: 26px;
  padding: 0 5px;
`

const ToolButton = styled.button`
  ${plainButton}
  display: flex;
  flex: none;
  align-items: center;
  justify-content: center;
  width: 24px;
  height: 24px;
  background: ${p => (p.$active ? '#b5d0fb' : 'transparent')};
`

const Divider = styled.div`
  flex: none;
  width: 1px;
  height: 18px;
  margin: 0 1px;
  background: #ccc;
`

const NetField = styled.div`
  ${field}
  flex: none;
  width: 195px;
  height: 20px;
  padding: 0 5px 0 2px;
  font-size: 12px;
`

const SchemeButton = styled.button`
  ${plainButton}
  height: 22px;
  margin: 0 1px 0 2px;
  padding: 0 5px;
  border: 1px solid #e60012;
  background: #fff;
`

const ToolSpacer = styled.div`
  flex: 1;
`

const Canvas = styled.div`
  flex: 1;
  min-height: 0;
  background: #fff;
`

const BoardSvg = styled.svg`
  display: block;
  width: 100%;
  height: 100%;
`

const Watermark = styled.text`
  fill: url(#mark);
  fill-opacity: 0.42;
  font-family: 'Liberation Sans', sans-serif;
  font-size: 16px;
`

const RightSplitter = styled.div`
  display: flex;
  flex: none;
  align-items: center;
  width: 9px;
  padding-top: 30px;
  border-left: 1px solid #d9d9d9;
  svg {
    flex: none;
    margin-left: -1px;
  }
`

const SidePanel = styled.aside`
  flex: none;
  width: 70px;
  margin: 10px 1px 0 0;
  border: 1px solid #d9d9d9;
  border-bottom: none;
  background: #efefef;
`

const SideButton = styled.button`
  ${plainButton}
  display: flex;
  flex-direction: column;
  align-items: center;
  width: 100%;
  height: 61px;
  padding-top: 7px;
`

const SideLabel = styled.span`
  line-height: 22px;
  white-space: nowrap;
`

const SideLine = styled.span`
  width: 42px;
  height: 1px;
  margin-top: 2px;
  background: #aaa;
`

const StatusBar = styled.footer`
  flex: none;
  height: 20px;
  background: #0191da;
  color: #fff;
  font-family: 'DejaVu Sans Mono', monospace;
  font-size: 15px;
  line-height: 20px;
  text-align: center;
`

export default App
